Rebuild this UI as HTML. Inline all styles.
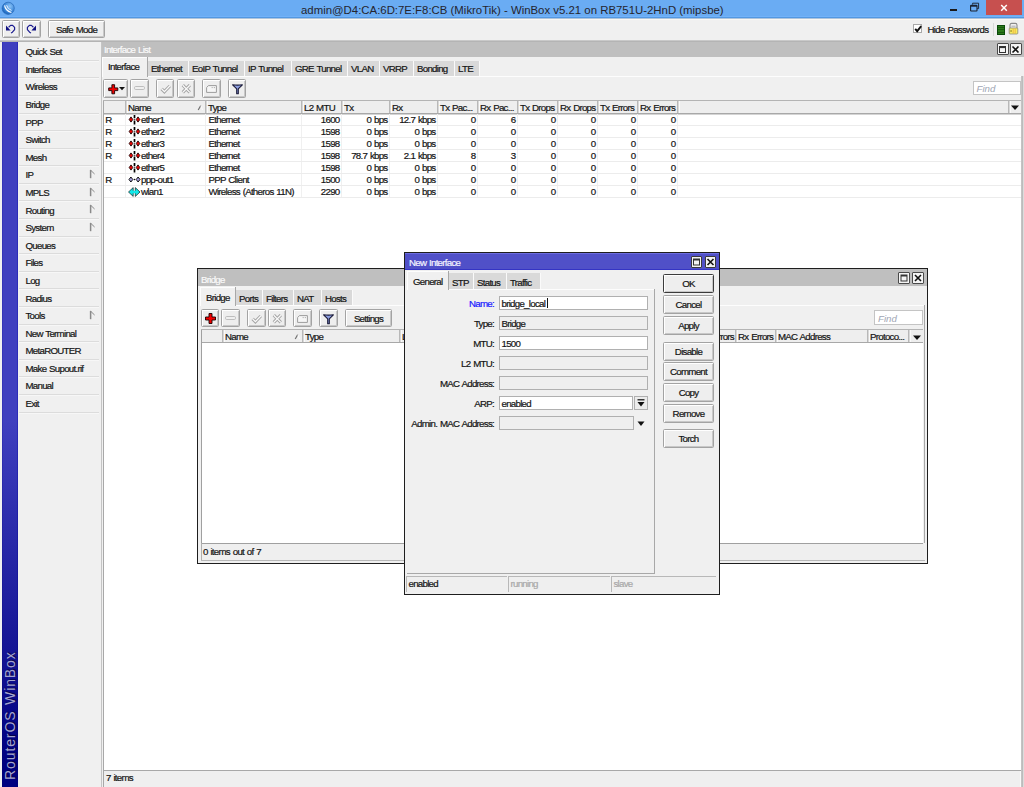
<!DOCTYPE html>
<html><head><meta charset="utf-8"><style>
html,body{margin:0;padding:0}
body{width:1024px;height:787px;overflow:hidden;position:relative;background:#f0f0f0;font-family:"Liberation Sans",sans-serif}
body>div,body>svg{position:absolute}
.t{white-space:nowrap;word-spacing:0.8px;-webkit-text-stroke:0.2px currentColor}
</style></head><body>
<div style="left:0px;top:0px;width:1024px;height:18px;background:#6aacf3"></div>
<div style="left:0px;top:16px;width:1024px;height:1px;background:#72b2f8"></div>
<div style="left:0px;top:17px;width:1024px;height:1px;background:#5298e2"></div>
<div style="left:0px;top:18px;width:1024px;height:1px;background:#aec4dc"></div>
<div style="left:0px;top:19px;width:1024px;height:1px;background:#f9f7f2"></div>
<svg style="position:absolute;left:0px;top:0px" width="17" height="17" viewBox="0 0 17 17"><defs><radialGradient id="ig" cx="0.62" cy="0.35" r="0.75"><stop offset="0" stop-color="#8cc4f8"/><stop offset="0.6" stop-color="#3a86d8"/><stop offset="1" stop-color="#0a56b0"/></radialGradient></defs><circle cx="8.2" cy="8.3" r="6.1" fill="url(#ig)" stroke="#2a6ab8" stroke-width="0.7"/><path d="M4.6 5.4 Q5.2 10.6 11.4 12.6" stroke="#fff" stroke-width="1.1" fill="none"/><path d="M6.6 5.2 Q7.4 9.2 11.6 10.4" stroke="#f0f6ff" stroke-width="0.9" fill="none"/></svg>
<div class="t" style="left:301px;top:4.65px;font-size:11.4px;line-height:11.4px;color:#25252f;letter-spacing:0px;word-spacing:0;-webkit-text-stroke:0">admin@D4:CA:6D:7E:F8:CB (MikroTik) - WinBox v5.21 on RB751U-2HnD (mipsbe)</div>
<div style="left:950px;top:9px;width:7px;height:2px;background:#1a1a1a"></div>
<svg style="position:absolute;left:969px;top:2px" width="11" height="10" viewBox="0 0 11 10"><path d="M3.6 2.6 V1.2 H9.6 V6.6 H8.2" fill="none" stroke="#1f2b3a" stroke-width="1"/><rect x="1.6" y="3.4" width="6.4" height="5.6" rx="0.6" fill="#6aacf3" stroke="#1a2230" stroke-width="1.1"/><rect x="1.6" y="3.4" width="6.4" height="1.3" fill="#1a2230"/></svg>
<div style="left:986px;top:0px;width:36px;height:15px;background:#c7504f"></div>
<svg style="position:absolute;left:1000px;top:4px" width="8" height="8" viewBox="0 0 8 8"><path d="M1.2 0.9 L6.8 6.7 M6.8 0.9 L1.2 6.7" stroke="#fff" stroke-width="1.5"/></svg>
<div style="left:1.5px;top:20px;width:18.5px;height:18px;background:#eeeeee;border:1px solid #a3a3a3;box-sizing:border-box;box-shadow:inset 1px 1px 0 #fff, inset -1px -1px 0 #c8c8c8;border-radius:1.5px"></div>
<div style="left:22px;top:20px;width:18.5px;height:18px;background:#eeeeee;border:1px solid #a3a3a3;box-sizing:border-box;box-shadow:inset 1px 1px 0 #fff, inset -1px -1px 0 #c8c8c8;border-radius:1.5px"></div>
<svg style="position:absolute;left:4px;top:23px" width="13" height="12" viewBox="0 0 13 12"><path d="M4.6 4.2 L6.6 2.4 H8.6 L10.6 4.4 V6.6 L8.4 9.2 L7 10" stroke="#1c1c90" stroke-width="1.2" fill="none" stroke-linejoin="round"/><path d="M2 2.6 V7.6 H6.6 Z" fill="#101080"/></svg>
<svg style="position:absolute;left:25px;top:23px" width="13" height="12" viewBox="0 0 13 12"><path d="M8.4 4.2 L6.4 2.4 H4.4 L2.4 4.4 V6.6 L4.6 9.2 L6 10" stroke="#1c1c90" stroke-width="1.2" fill="none" stroke-linejoin="round"/><path d="M11 2.6 V7.6 H6.4 Z" fill="#101080"/></svg>
<div style="left:48px;top:20px;width:57px;height:18px;background:#eeeeee;border:1px solid #a3a3a3;box-sizing:border-box;box-shadow:inset 1px 1px 0 #fff, inset -1px -1px 0 #c8c8c8;border-radius:1.5px"></div>
<div class="t" style="left:48px;width:57px;top:24.69px;font-size:9.7px;line-height:9.7px;color:#141414;letter-spacing:-0.72px;text-align:center;">Safe Mode</div>
<div style="left:913px;top:24px;width:9px;height:9px;background:#fff;border:1px solid #a8a8a8;box-sizing:border-box"></div>
<svg style="position:absolute;left:914px;top:25px" width="8" height="8" viewBox="0 0 8 8"><path d="M1.2 3.8 L3.2 6.2 L7.2 1.2" stroke="#111" stroke-width="1.9" fill="none"/></svg>
<div class="t" style="left:927.6px;top:24.99px;font-size:9.7px;line-height:9.7px;color:#141414;letter-spacing:-0.72px;">Hide Passwords</div>
<div style="left:993px;top:23px;width:1px;height:13px;background:#d8d8d8"></div>
<div style="left:997px;top:25px;width:8px;height:9.5px;background:repeating-linear-gradient(#2a7a1a 0px,#2a7a1a 1.2px,#1a5a10 1.2px,#1a5a10 2.2px);border:1px solid #0a4a0a;box-sizing:border-box"></div>
<svg style="position:absolute;left:1008px;top:22px" width="11" height="13" viewBox="0 0 11 13"><path d="M2 6.5 V3.2 Q2 1.4 3.6 1.4 H7.4 Q9 1.4 9 3.2 V6.5" stroke="#8a8a8a" stroke-width="1.1" fill="none"/><path d="M3.4 4.2 H7.6" stroke="#9a9a9a" stroke-width="0.8"/><rect x="1.2" y="6" width="8.6" height="6" rx="0.8" fill="#f6ee60" stroke="#8a8a80" stroke-width="0.8"/><path d="M5.2 6.5 V11.6 M7.2 6.5 V11.6" stroke="#f0b040" stroke-width="0.9"/><rect x="2.6" y="8.2" width="0.9" height="1.6" fill="#6a5010"/></svg>
<div style="left:0px;top:40px;width:1024px;height:1px;background:#c9c9c9"></div>
<div style="left:0px;top:41px;width:1024px;height:1px;background:#b4b4b4"></div>
<div style="left:0px;top:42px;width:101px;height:745px;background:#f0f0f0"></div>
<div style="left:2px;top:42px;width:16px;height:745px;background:linear-gradient(#3f3fbf 0%, #3f3fbf 50.7%, #000080 97%, #000080 100%)"></div>
<div style="left:2px;top:42px;width:1px;height:745px;background:linear-gradient(#3434b8 0%, #3434b8 50%, #000078 97%)"></div>
<div style="left:17px;top:42px;width:1px;height:745px;background:linear-gradient(#2c2cb8 0%, #2c2cb8 50%, #000078 97%)"></div>
<div class="t" style="left:4.5px;top:779.5px;font-size:14px;line-height:11px;color:#a4a4d0;-webkit-text-stroke:0;text-shadow:0.8px 0.8px 0.8px rgba(0,0,40,0.7);transform:rotate(-90deg);transform-origin:0 0;letter-spacing:0.9px">RouterOS WinBox</div>
<div style="left:19px;top:60px;width:80px;height:1px;background:#dcdcdc"></div>
<div style="left:19px;top:61px;width:80px;height:1px;background:#f7f7f7"></div>
<div class="t" style="left:25.5px;top:47.29px;font-size:9.7px;line-height:9.7px;color:#141414;letter-spacing:-0.72px;">Quick Set</div>
<div style="left:19px;top:77px;width:80px;height:1px;background:#dcdcdc"></div>
<div style="left:19px;top:78px;width:80px;height:1px;background:#f7f7f7"></div>
<div class="t" style="left:25.5px;top:64.88px;font-size:9.7px;line-height:9.7px;color:#141414;letter-spacing:-0.72px;">Interfaces</div>
<div style="left:19px;top:95px;width:80px;height:1px;background:#dcdcdc"></div>
<div style="left:19px;top:96px;width:80px;height:1px;background:#f7f7f7"></div>
<div class="t" style="left:25.5px;top:82.46px;font-size:9.7px;line-height:9.7px;color:#141414;letter-spacing:-0.72px;">Wireless</div>
<div style="left:19px;top:113px;width:80px;height:1px;background:#dcdcdc"></div>
<div style="left:19px;top:114px;width:80px;height:1px;background:#f7f7f7"></div>
<div class="t" style="left:25.5px;top:100.05px;font-size:9.7px;line-height:9.7px;color:#141414;letter-spacing:-0.72px;">Bridge</div>
<div style="left:19px;top:130px;width:80px;height:1px;background:#dcdcdc"></div>
<div style="left:19px;top:131px;width:80px;height:1px;background:#f7f7f7"></div>
<div class="t" style="left:25.5px;top:117.64px;font-size:9.7px;line-height:9.7px;color:#141414;letter-spacing:-0.72px;">PPP</div>
<div style="left:19px;top:148px;width:80px;height:1px;background:#dcdcdc"></div>
<div style="left:19px;top:149px;width:80px;height:1px;background:#f7f7f7"></div>
<div class="t" style="left:25.5px;top:135.23px;font-size:9.7px;line-height:9.7px;color:#141414;letter-spacing:-0.72px;">Switch</div>
<div style="left:19px;top:165px;width:80px;height:1px;background:#dcdcdc"></div>
<div style="left:19px;top:166px;width:80px;height:1px;background:#f7f7f7"></div>
<div class="t" style="left:25.5px;top:152.82px;font-size:9.7px;line-height:9.7px;color:#141414;letter-spacing:-0.72px;">Mesh</div>
<div style="left:19px;top:183px;width:80px;height:1px;background:#dcdcdc"></div>
<div style="left:19px;top:184px;width:80px;height:1px;background:#f7f7f7"></div>
<div class="t" style="left:25.5px;top:170.40px;font-size:9.7px;line-height:9.7px;color:#141414;letter-spacing:-0.72px;">IP</div>
<svg style="position:absolute;left:88.5px;top:168.9px" width="7" height="10" viewBox="0 0 7 10"><path d="M1.6 1 V9.2" stroke="#8a8a8a" stroke-width="1.5" fill="none"/><path d="M1.6 1.2 L5.6 5" stroke="#8a8a8a" stroke-width="1" fill="none"/></svg>
<div style="left:19px;top:200px;width:80px;height:1px;background:#dcdcdc"></div>
<div style="left:19px;top:201px;width:80px;height:1px;background:#f7f7f7"></div>
<div class="t" style="left:25.5px;top:187.99px;font-size:9.7px;line-height:9.7px;color:#141414;letter-spacing:-0.72px;">MPLS</div>
<svg style="position:absolute;left:88.5px;top:186.5px" width="7" height="10" viewBox="0 0 7 10"><path d="M1.6 1 V9.2" stroke="#8a8a8a" stroke-width="1.5" fill="none"/><path d="M1.6 1.2 L5.6 5" stroke="#8a8a8a" stroke-width="1" fill="none"/></svg>
<div style="left:19px;top:218px;width:80px;height:1px;background:#dcdcdc"></div>
<div style="left:19px;top:219px;width:80px;height:1px;background:#f7f7f7"></div>
<div class="t" style="left:25.5px;top:205.58px;font-size:9.7px;line-height:9.7px;color:#141414;letter-spacing:-0.72px;">Routing</div>
<svg style="position:absolute;left:88.5px;top:204.1px" width="7" height="10" viewBox="0 0 7 10"><path d="M1.6 1 V9.2" stroke="#8a8a8a" stroke-width="1.5" fill="none"/><path d="M1.6 1.2 L5.6 5" stroke="#8a8a8a" stroke-width="1" fill="none"/></svg>
<div style="left:19px;top:236px;width:80px;height:1px;background:#dcdcdc"></div>
<div style="left:19px;top:237px;width:80px;height:1px;background:#f7f7f7"></div>
<div class="t" style="left:25.5px;top:223.17px;font-size:9.7px;line-height:9.7px;color:#141414;letter-spacing:-0.72px;">System</div>
<svg style="position:absolute;left:88.5px;top:221.7px" width="7" height="10" viewBox="0 0 7 10"><path d="M1.6 1 V9.2" stroke="#8a8a8a" stroke-width="1.5" fill="none"/><path d="M1.6 1.2 L5.6 5" stroke="#8a8a8a" stroke-width="1" fill="none"/></svg>
<div style="left:19px;top:253px;width:80px;height:1px;background:#dcdcdc"></div>
<div style="left:19px;top:254px;width:80px;height:1px;background:#f7f7f7"></div>
<div class="t" style="left:25.5px;top:240.76px;font-size:9.7px;line-height:9.7px;color:#141414;letter-spacing:-0.72px;">Queues</div>
<div style="left:19px;top:271px;width:80px;height:1px;background:#dcdcdc"></div>
<div style="left:19px;top:272px;width:80px;height:1px;background:#f7f7f7"></div>
<div class="t" style="left:25.5px;top:258.34px;font-size:9.7px;line-height:9.7px;color:#141414;letter-spacing:-0.72px;">Files</div>
<div style="left:19px;top:288px;width:80px;height:1px;background:#dcdcdc"></div>
<div style="left:19px;top:289px;width:80px;height:1px;background:#f7f7f7"></div>
<div class="t" style="left:25.5px;top:275.93px;font-size:9.7px;line-height:9.7px;color:#141414;letter-spacing:-0.72px;">Log</div>
<div style="left:19px;top:306px;width:80px;height:1px;background:#dcdcdc"></div>
<div style="left:19px;top:307px;width:80px;height:1px;background:#f7f7f7"></div>
<div class="t" style="left:25.5px;top:293.52px;font-size:9.7px;line-height:9.7px;color:#141414;letter-spacing:-0.72px;">Radius</div>
<div style="left:19px;top:324px;width:80px;height:1px;background:#dcdcdc"></div>
<div style="left:19px;top:325px;width:80px;height:1px;background:#f7f7f7"></div>
<div class="t" style="left:25.5px;top:311.11px;font-size:9.7px;line-height:9.7px;color:#141414;letter-spacing:-0.72px;">Tools</div>
<svg style="position:absolute;left:88.5px;top:309.6px" width="7" height="10" viewBox="0 0 7 10"><path d="M1.6 1 V9.2" stroke="#8a8a8a" stroke-width="1.5" fill="none"/><path d="M1.6 1.2 L5.6 5" stroke="#8a8a8a" stroke-width="1" fill="none"/></svg>
<div style="left:19px;top:341px;width:80px;height:1px;background:#dcdcdc"></div>
<div style="left:19px;top:342px;width:80px;height:1px;background:#f7f7f7"></div>
<div class="t" style="left:25.5px;top:328.70px;font-size:9.7px;line-height:9.7px;color:#141414;letter-spacing:-0.72px;">New Terminal</div>
<div style="left:19px;top:359px;width:80px;height:1px;background:#dcdcdc"></div>
<div style="left:19px;top:360px;width:80px;height:1px;background:#f7f7f7"></div>
<div class="t" style="left:25.5px;top:346.28px;font-size:9.7px;line-height:9.7px;color:#141414;letter-spacing:-0.72px;">MetaROUTER</div>
<div style="left:19px;top:376px;width:80px;height:1px;background:#dcdcdc"></div>
<div style="left:19px;top:377px;width:80px;height:1px;background:#f7f7f7"></div>
<div class="t" style="left:25.5px;top:363.87px;font-size:9.7px;line-height:9.7px;color:#141414;letter-spacing:-0.72px;">Make Supout.rif</div>
<div style="left:19px;top:394px;width:80px;height:1px;background:#dcdcdc"></div>
<div style="left:19px;top:395px;width:80px;height:1px;background:#f7f7f7"></div>
<div class="t" style="left:25.5px;top:381.46px;font-size:9.7px;line-height:9.7px;color:#141414;letter-spacing:-0.72px;">Manual</div>
<div style="left:19px;top:412px;width:80px;height:1px;background:#dcdcdc"></div>
<div style="left:19px;top:413px;width:80px;height:1px;background:#f7f7f7"></div>
<div class="t" style="left:25.5px;top:399.05px;font-size:9.7px;line-height:9.7px;color:#141414;letter-spacing:-0.72px;">Exit</div>
<div style="left:101px;top:42px;width:1px;height:745px;background:#c4c4c4"></div>
<div style="left:102px;top:42px;width:922px;height:745px;background:#f0f0f0"></div>
<div style="left:102px;top:42px;width:922px;height:15px;background:#bfbfbf"></div>
<div class="t" style="left:104px;top:45.39px;font-size:9.7px;line-height:9.7px;color:#fafafa;letter-spacing:-0.72px;">Interface List</div>
<div style="left:997px;top:43px;width:11.5px;height:12px;background:#f4f4f4;border:1px solid #4a4a4a;box-sizing:border-box;border-radius:1px"></div>
<svg style="position:absolute;left:997px;top:43.5px" width="11" height="11" viewBox="0 0 11 11"><rect x="2.5" y="2.5" width="6" height="6" fill="none" stroke="#333" stroke-width="1"/><rect x="2.5" y="2.5" width="6" height="1.6" fill="#333"/></svg>
<div style="left:1010px;top:43px;width:11.5px;height:12px;background:#f4f4f4;border:1px solid #4a4a4a;box-sizing:border-box;border-radius:1px"></div>
<svg style="position:absolute;left:1010px;top:43.5px" width="11" height="11" viewBox="0 0 11 11"><path d="M2.5 2.5 L8.5 8.5 M8.5 2.5 L2.5 8.5" stroke="#111" stroke-width="1.6"/></svg>
<div style="left:102px;top:57px;width:46px;height:20px;background:#f0f0f0"></div>
<div style="left:102px;top:57px;width:46px;height:1px;background:#fdfdfd"></div>
<div style="left:102px;top:57px;width:1px;height:20px;background:#fdfdfd"></div>
<div style="left:147px;top:57px;width:1px;height:20px;background:#a8a8a8"></div>
<div class="t" style="left:108px;top:62.49px;font-size:9.7px;line-height:9.7px;color:#141414;letter-spacing:-0.72px;">Interface</div>
<div style="left:148px;top:61px;width:40px;height:15px;background:#d9d9d9"></div>
<div style="left:188px;top:61px;width:1px;height:15px;background:#fafafa"></div>
<div class="t" style="left:151px;top:64.19px;font-size:9.7px;line-height:9.7px;color:#141414;letter-spacing:-0.72px;">Ethernet</div>
<div style="left:189px;top:61px;width:55px;height:15px;background:#d9d9d9"></div>
<div style="left:244px;top:61px;width:1px;height:15px;background:#fafafa"></div>
<div class="t" style="left:192px;top:64.19px;font-size:9.7px;line-height:9.7px;color:#141414;letter-spacing:-0.72px;">EoIP Tunnel</div>
<div style="left:245px;top:61px;width:46px;height:15px;background:#d9d9d9"></div>
<div style="left:291px;top:61px;width:1px;height:15px;background:#fafafa"></div>
<div class="t" style="left:248px;top:64.19px;font-size:9.7px;line-height:9.7px;color:#141414;letter-spacing:-0.72px;">IP Tunnel</div>
<div style="left:292px;top:61px;width:55px;height:15px;background:#d9d9d9"></div>
<div style="left:347px;top:61px;width:1px;height:15px;background:#fafafa"></div>
<div class="t" style="left:295px;top:64.19px;font-size:9.7px;line-height:9.7px;color:#141414;letter-spacing:-0.72px;">GRE Tunnel</div>
<div style="left:348px;top:61px;width:31px;height:15px;background:#d9d9d9"></div>
<div style="left:379px;top:61px;width:1px;height:15px;background:#fafafa"></div>
<div class="t" style="left:351px;top:64.19px;font-size:9.7px;line-height:9.7px;color:#141414;letter-spacing:-0.72px;">VLAN</div>
<div style="left:380px;top:61px;width:33px;height:15px;background:#d9d9d9"></div>
<div style="left:413px;top:61px;width:1px;height:15px;background:#fafafa"></div>
<div class="t" style="left:383px;top:64.19px;font-size:9.7px;line-height:9.7px;color:#141414;letter-spacing:-0.72px;">VRRP</div>
<div style="left:414px;top:61px;width:40px;height:15px;background:#d9d9d9"></div>
<div style="left:454px;top:61px;width:1px;height:15px;background:#fafafa"></div>
<div class="t" style="left:417px;top:64.19px;font-size:9.7px;line-height:9.7px;color:#141414;letter-spacing:-0.72px;">Bonding</div>
<div style="left:455px;top:61px;width:24px;height:15px;background:#d9d9d9"></div>
<div style="left:479px;top:61px;width:1px;height:15px;background:#fafafa"></div>
<div class="t" style="left:458px;top:64.19px;font-size:9.7px;line-height:9.7px;color:#141414;letter-spacing:-0.72px;">LTE</div>
<div style="left:148px;top:76px;width:874px;height:1px;background:#fdfdfd"></div>
<div style="left:103px;top:79px;width:25px;height:19px;background:#eeeeee;border:1px solid #a3a3a3;box-sizing:border-box;box-shadow:inset 1px 1px 0 #fff, inset -1px -1px 0 #c8c8c8;border-radius:1.5px"></div>
<svg style="position:absolute;left:107.5px;top:83.5px" width="11" height="11" viewBox="0 0 11 11"><path d="M3.9 0.7 H6.6 V3.9 H9.8 V6.6 H6.6 V9.8 H3.9 V6.6 H0.7 V3.9 H3.9 Z" fill="#f00000" stroke="#1a0000" stroke-width="0.9" stroke-linejoin="round"/></svg>
<svg style="position:absolute;left:119px;top:86.8px" width="6" height="4" viewBox="0 0 6 4"><path d="M0 0 H6 L3 3.2 Z" fill="#111"/></svg>
<div style="left:130px;top:79px;width:19px;height:19px;background:#eeeeee;border:1px solid #a3a3a3;box-sizing:border-box;box-shadow:inset 1px 1px 0 #fff, inset -1px -1px 0 #c8c8c8;border-radius:1.5px"></div>
<svg style="position:absolute;left:134px;top:86px" width="11" height="4" viewBox="0 0 11 4"><rect x="0.6" y="0.6" width="9.8" height="2.8" rx="0.8" fill="#f6f6f6" stroke="#b8b8b8" stroke-width="1"/></svg>
<div style="left:156px;top:79px;width:18px;height:19px;background:#eeeeee;border:1px solid #a3a3a3;box-sizing:border-box;box-shadow:inset 1px 1px 0 #fff, inset -1px -1px 0 #c8c8c8;border-radius:1.5px"></div>
<svg style="position:absolute;left:160px;top:84px" width="12" height="10" viewBox="0 0 12 10"><path d="M1.6 4.8 L4.4 7.6 L9.8 2" stroke="#a4a4a4" stroke-width="3.2" fill="none"/><path d="M1.6 4.8 L4.4 7.6 L9.8 2" stroke="#fafafa" stroke-width="1.3" fill="none"/></svg>
<div style="left:177px;top:79px;width:18px;height:19px;background:#eeeeee;border:1px solid #a3a3a3;box-sizing:border-box;box-shadow:inset 1px 1px 0 #fff, inset -1px -1px 0 #c8c8c8;border-radius:1.5px"></div>
<svg style="position:absolute;left:181px;top:84px" width="11" height="10" viewBox="0 0 11 10"><path d="M1.8 1.2 L8.8 8.4 M8.8 1.2 L1.8 8.4" stroke="#a4a4a4" stroke-width="3.2" fill="none"/><path d="M1.8 1.2 L8.8 8.4 M8.8 1.2 L1.8 8.4" stroke="#fafafa" stroke-width="1.3" fill="none"/></svg>
<div style="left:202px;top:79px;width:19px;height:19px;background:#eeeeee;border:1px solid #a3a3a3;box-sizing:border-box;box-shadow:inset 1px 1px 0 #fff, inset -1px -1px 0 #c8c8c8;border-radius:1.5px"></div>
<svg style="position:absolute;left:206px;top:84px" width="11" height="9" viewBox="0 0 11 9"><path d="M0.6 3.6 L2.4 1.6 H10.4 V8.4 H0.6 Z" fill="#f6f6f6" stroke="#9c9c9c" stroke-width="1"/><path d="M5.6 3.6 h1.2 M7.8 3.6 h1.2" stroke="#a8a8a8" stroke-width="0.9"/></svg>
<div style="left:228px;top:79px;width:18px;height:19px;background:#eeeeee;border:1px solid #a3a3a3;box-sizing:border-box;box-shadow:inset 1px 1px 0 #fff, inset -1px -1px 0 #c8c8c8;border-radius:1.5px"></div>
<svg style="position:absolute;left:232px;top:83.8px" width="11" height="11" viewBox="0 0 11 11"><path d="M0.6 0.8 Q5.5 1.4 10.4 0.8 L6.3 4.8 V9.8 H4.7 V4.8 Z" fill="#8c9ee0" stroke="#1a1a38" stroke-width="1.1" stroke-linejoin="round"/></svg>
<div style="left:973px;top:81px;width:48px;height:14px;background:#fff;border:1px solid #c4c4c4;box-sizing:border-box"></div>
<div class="t" style="left:976.5px;top:84.39px;font-size:9.7px;line-height:9.7px;color:#a0a6b4;letter-spacing:0px;font-style:italic;-webkit-text-stroke:0">Find</div>
<div style="left:1021px;top:76px;width:1px;height:711px;background:#c4c4c4"></div>
<div style="left:1022px;top:76px;width:1px;height:711px;background:#bcbcbc"></div>
<div style="left:1023px;top:76px;width:1px;height:711px;background:#dcdcdc"></div>
<div style="left:103px;top:100px;width:918px;height:671px;background:#fff"></div>
<div style="left:103px;top:100px;width:1px;height:687px;background:#a8a8a8"></div>
<div style="left:103px;top:100px;width:918px;height:1px;background:#b4b4b4"></div>
<div style="left:104px;top:101px;width:917px;height:13px;background:#eeeeee"></div>
<div style="left:104px;top:113px;width:917px;height:1px;background:#a8a8a8"></div>
<div style="left:104px;top:114px;width:917px;height:1px;background:#d4d4d4"></div>
<div style="left:125px;top:101px;width:1px;height:12px;background:#b8b8b8"></div>
<div style="left:126px;top:101px;width:1px;height:12px;background:#d8d8d8"></div>
<div style="left:127px;top:101px;width:1px;height:12px;background:#fafafa"></div>
<div class="t" style="left:128px;top:103.49px;font-size:9.7px;line-height:9.7px;color:#141414;letter-spacing:-0.72px;">Name</div>
<div style="left:205px;top:101px;width:1px;height:12px;background:#b8b8b8"></div>
<div style="left:206px;top:101px;width:1px;height:12px;background:#d8d8d8"></div>
<div style="left:207px;top:101px;width:1px;height:12px;background:#fafafa"></div>
<div class="t" style="left:208px;top:103.49px;font-size:9.7px;line-height:9.7px;color:#141414;letter-spacing:-0.72px;">Type</div>
<div style="left:301px;top:101px;width:1px;height:12px;background:#b8b8b8"></div>
<div style="left:302px;top:101px;width:1px;height:12px;background:#d8d8d8"></div>
<div style="left:303px;top:101px;width:1px;height:12px;background:#fafafa"></div>
<div class="t" style="left:304px;top:103.49px;font-size:9.7px;line-height:9.7px;color:#141414;letter-spacing:-0.72px;">L2 MTU</div>
<div style="left:341px;top:101px;width:1px;height:12px;background:#b8b8b8"></div>
<div style="left:342px;top:101px;width:1px;height:12px;background:#d8d8d8"></div>
<div style="left:343px;top:101px;width:1px;height:12px;background:#fafafa"></div>
<div class="t" style="left:344px;top:103.49px;font-size:9.7px;line-height:9.7px;color:#141414;letter-spacing:-0.72px;">Tx</div>
<div style="left:389px;top:101px;width:1px;height:12px;background:#b8b8b8"></div>
<div style="left:390px;top:101px;width:1px;height:12px;background:#d8d8d8"></div>
<div style="left:391px;top:101px;width:1px;height:12px;background:#fafafa"></div>
<div class="t" style="left:392px;top:103.49px;font-size:9.7px;line-height:9.7px;color:#141414;letter-spacing:-0.72px;">Rx</div>
<div style="left:437px;top:101px;width:1px;height:12px;background:#b8b8b8"></div>
<div style="left:438px;top:101px;width:1px;height:12px;background:#d8d8d8"></div>
<div style="left:439px;top:101px;width:1px;height:12px;background:#fafafa"></div>
<div class="t" style="left:440px;top:103.49px;font-size:9.7px;line-height:9.7px;color:#141414;letter-spacing:-0.72px;">Tx Pac...</div>
<div style="left:477px;top:101px;width:1px;height:12px;background:#b8b8b8"></div>
<div style="left:478px;top:101px;width:1px;height:12px;background:#d8d8d8"></div>
<div style="left:479px;top:101px;width:1px;height:12px;background:#fafafa"></div>
<div class="t" style="left:480px;top:103.49px;font-size:9.7px;line-height:9.7px;color:#141414;letter-spacing:-0.72px;">Rx Pac...</div>
<div style="left:517px;top:101px;width:1px;height:12px;background:#b8b8b8"></div>
<div style="left:518px;top:101px;width:1px;height:12px;background:#d8d8d8"></div>
<div style="left:519px;top:101px;width:1px;height:12px;background:#fafafa"></div>
<div class="t" style="left:520px;top:103.49px;font-size:9.7px;line-height:9.7px;color:#141414;letter-spacing:-0.72px;">Tx Drops</div>
<div style="left:557px;top:101px;width:1px;height:12px;background:#b8b8b8"></div>
<div style="left:558px;top:101px;width:1px;height:12px;background:#d8d8d8"></div>
<div style="left:559px;top:101px;width:1px;height:12px;background:#fafafa"></div>
<div class="t" style="left:560px;top:103.49px;font-size:9.7px;line-height:9.7px;color:#141414;letter-spacing:-0.72px;">Rx Drops</div>
<div style="left:597px;top:101px;width:1px;height:12px;background:#b8b8b8"></div>
<div style="left:598px;top:101px;width:1px;height:12px;background:#d8d8d8"></div>
<div style="left:599px;top:101px;width:1px;height:12px;background:#fafafa"></div>
<div class="t" style="left:600px;top:103.49px;font-size:9.7px;line-height:9.7px;color:#141414;letter-spacing:-0.72px;">Tx Errors</div>
<div style="left:637px;top:101px;width:1px;height:12px;background:#b8b8b8"></div>
<div style="left:638px;top:101px;width:1px;height:12px;background:#d8d8d8"></div>
<div style="left:639px;top:101px;width:1px;height:12px;background:#fafafa"></div>
<div class="t" style="left:640px;top:103.49px;font-size:9.7px;line-height:9.7px;color:#141414;letter-spacing:-0.72px;">Rx Errors</div>
<div style="left:677px;top:101px;width:1px;height:12px;background:#b8b8b8"></div>
<div style="left:678px;top:101px;width:1px;height:12px;background:#d8d8d8"></div>
<div style="left:679px;top:101px;width:1px;height:12px;background:#fafafa"></div>
<div style="left:1008px;top:101px;width:1px;height:12px;background:#b8b8b8"></div>
<div style="left:1009px;top:101px;width:1px;height:12px;background:#d8d8d8"></div>
<div style="left:1010px;top:101px;width:1px;height:12px;background:#fafafa"></div>
<svg style="position:absolute;left:197px;top:104px" width="7" height="7" viewBox="0 0 7 7"><path d="M1.2 6 L3.8 1.5" stroke="#707070" stroke-width="1.2" fill="none"/><path d="M3.8 1.5 L5.5 6" stroke="#fdfdfd" stroke-width="0.9" fill="none"/></svg>
<svg style="position:absolute;left:1011px;top:104.8px" width="8" height="6" viewBox="0 0 8 6"><path d="M0 0.5 H8 L4 5 Z" fill="#111"/></svg>
<div style="left:104px;top:125px;width:917px;height:1px;background:#ececec"></div>
<div style="left:125px;top:114px;width:1px;height:11px;background:#f0f0f0"></div>
<div style="left:205px;top:114px;width:1px;height:11px;background:#f0f0f0"></div>
<div style="left:301px;top:114px;width:1px;height:11px;background:#f0f0f0"></div>
<div style="left:341px;top:114px;width:1px;height:11px;background:#f0f0f0"></div>
<div style="left:389px;top:114px;width:1px;height:11px;background:#f0f0f0"></div>
<div style="left:437px;top:114px;width:1px;height:11px;background:#f0f0f0"></div>
<div style="left:477px;top:114px;width:1px;height:11px;background:#f0f0f0"></div>
<div style="left:517px;top:114px;width:1px;height:11px;background:#f0f0f0"></div>
<div style="left:557px;top:114px;width:1px;height:11px;background:#f0f0f0"></div>
<div style="left:597px;top:114px;width:1px;height:11px;background:#f0f0f0"></div>
<div style="left:637px;top:114px;width:1px;height:11px;background:#f0f0f0"></div>
<div style="left:677px;top:114px;width:1px;height:11px;background:#f0f0f0"></div>
<div class="t" style="left:105.3px;top:115.39px;font-size:9.7px;line-height:9.7px;color:#141414;letter-spacing:-0.72px;">R</div>
<svg style="position:absolute;left:128px;top:114.5px" width="13" height="10" viewBox="0 0 13 10"><path d="M1.2 4.5 L3 1.9 L4.8 4.5 L3 7.1 Z" fill="#ee0000" stroke="#1a0000" stroke-width="0.9"/><path d="M8.2 4.5 L10 1.9 L11.8 4.5 L10 7.1 Z" fill="#ee0000" stroke="#1a0000" stroke-width="0.9"/><path d="M6.5 0 V3.2 M6.5 5.6 V9.5" stroke="#000" stroke-width="1.7"/><circle cx="6.5" cy="4.4" r="0.6" fill="#555"/></svg>
<div class="t" style="left:141px;top:115.39px;font-size:9.7px;line-height:9.7px;color:#141414;letter-spacing:-0.72px;">ether1</div>
<div class="t" style="left:208.5px;top:115.39px;font-size:9.7px;line-height:9.7px;color:#141414;letter-spacing:-0.72px;">Ethernet</div>
<div class="t" style="right:684.5px;top:115.39px;font-size:9.7px;line-height:9.7px;color:#141414;letter-spacing:-0.72px;text-align:right;">1600</div>
<div class="t" style="right:636.5px;top:115.39px;font-size:9.7px;line-height:9.7px;color:#141414;letter-spacing:-0.72px;text-align:right;">0 bps</div>
<div class="t" style="right:588.5px;top:115.39px;font-size:9.7px;line-height:9.7px;color:#141414;letter-spacing:-0.72px;text-align:right;">12.7 kbps</div>
<div class="t" style="right:548.5px;top:115.39px;font-size:9.7px;line-height:9.7px;color:#141414;letter-spacing:-0.72px;text-align:right;">0</div>
<div class="t" style="right:508.5px;top:115.39px;font-size:9.7px;line-height:9.7px;color:#141414;letter-spacing:-0.72px;text-align:right;">6</div>
<div class="t" style="right:468.5px;top:115.39px;font-size:9.7px;line-height:9.7px;color:#141414;letter-spacing:-0.72px;text-align:right;">0</div>
<div class="t" style="right:428.5px;top:115.39px;font-size:9.7px;line-height:9.7px;color:#141414;letter-spacing:-0.72px;text-align:right;">0</div>
<div class="t" style="right:388.5px;top:115.39px;font-size:9.7px;line-height:9.7px;color:#141414;letter-spacing:-0.72px;text-align:right;">0</div>
<div class="t" style="right:348.5px;top:115.39px;font-size:9.7px;line-height:9.7px;color:#141414;letter-spacing:-0.72px;text-align:right;">0</div>
<div style="left:104px;top:137px;width:917px;height:1px;background:#ececec"></div>
<div style="left:125px;top:126px;width:1px;height:11px;background:#f0f0f0"></div>
<div style="left:205px;top:126px;width:1px;height:11px;background:#f0f0f0"></div>
<div style="left:301px;top:126px;width:1px;height:11px;background:#f0f0f0"></div>
<div style="left:341px;top:126px;width:1px;height:11px;background:#f0f0f0"></div>
<div style="left:389px;top:126px;width:1px;height:11px;background:#f0f0f0"></div>
<div style="left:437px;top:126px;width:1px;height:11px;background:#f0f0f0"></div>
<div style="left:477px;top:126px;width:1px;height:11px;background:#f0f0f0"></div>
<div style="left:517px;top:126px;width:1px;height:11px;background:#f0f0f0"></div>
<div style="left:557px;top:126px;width:1px;height:11px;background:#f0f0f0"></div>
<div style="left:597px;top:126px;width:1px;height:11px;background:#f0f0f0"></div>
<div style="left:637px;top:126px;width:1px;height:11px;background:#f0f0f0"></div>
<div style="left:677px;top:126px;width:1px;height:11px;background:#f0f0f0"></div>
<div class="t" style="left:105.3px;top:127.39px;font-size:9.7px;line-height:9.7px;color:#141414;letter-spacing:-0.72px;">R</div>
<svg style="position:absolute;left:128px;top:126.5px" width="13" height="10" viewBox="0 0 13 10"><path d="M1.2 4.5 L3 1.9 L4.8 4.5 L3 7.1 Z" fill="#ee0000" stroke="#1a0000" stroke-width="0.9"/><path d="M8.2 4.5 L10 1.9 L11.8 4.5 L10 7.1 Z" fill="#ee0000" stroke="#1a0000" stroke-width="0.9"/><path d="M6.5 0 V3.2 M6.5 5.6 V9.5" stroke="#000" stroke-width="1.7"/><circle cx="6.5" cy="4.4" r="0.6" fill="#555"/></svg>
<div class="t" style="left:141px;top:127.39px;font-size:9.7px;line-height:9.7px;color:#141414;letter-spacing:-0.72px;">ether2</div>
<div class="t" style="left:208.5px;top:127.39px;font-size:9.7px;line-height:9.7px;color:#141414;letter-spacing:-0.72px;">Ethernet</div>
<div class="t" style="right:684.5px;top:127.39px;font-size:9.7px;line-height:9.7px;color:#141414;letter-spacing:-0.72px;text-align:right;">1598</div>
<div class="t" style="right:636.5px;top:127.39px;font-size:9.7px;line-height:9.7px;color:#141414;letter-spacing:-0.72px;text-align:right;">0 bps</div>
<div class="t" style="right:588.5px;top:127.39px;font-size:9.7px;line-height:9.7px;color:#141414;letter-spacing:-0.72px;text-align:right;">0 bps</div>
<div class="t" style="right:548.5px;top:127.39px;font-size:9.7px;line-height:9.7px;color:#141414;letter-spacing:-0.72px;text-align:right;">0</div>
<div class="t" style="right:508.5px;top:127.39px;font-size:9.7px;line-height:9.7px;color:#141414;letter-spacing:-0.72px;text-align:right;">0</div>
<div class="t" style="right:468.5px;top:127.39px;font-size:9.7px;line-height:9.7px;color:#141414;letter-spacing:-0.72px;text-align:right;">0</div>
<div class="t" style="right:428.5px;top:127.39px;font-size:9.7px;line-height:9.7px;color:#141414;letter-spacing:-0.72px;text-align:right;">0</div>
<div class="t" style="right:388.5px;top:127.39px;font-size:9.7px;line-height:9.7px;color:#141414;letter-spacing:-0.72px;text-align:right;">0</div>
<div class="t" style="right:348.5px;top:127.39px;font-size:9.7px;line-height:9.7px;color:#141414;letter-spacing:-0.72px;text-align:right;">0</div>
<div style="left:104px;top:149px;width:917px;height:1px;background:#ececec"></div>
<div style="left:125px;top:138px;width:1px;height:11px;background:#f0f0f0"></div>
<div style="left:205px;top:138px;width:1px;height:11px;background:#f0f0f0"></div>
<div style="left:301px;top:138px;width:1px;height:11px;background:#f0f0f0"></div>
<div style="left:341px;top:138px;width:1px;height:11px;background:#f0f0f0"></div>
<div style="left:389px;top:138px;width:1px;height:11px;background:#f0f0f0"></div>
<div style="left:437px;top:138px;width:1px;height:11px;background:#f0f0f0"></div>
<div style="left:477px;top:138px;width:1px;height:11px;background:#f0f0f0"></div>
<div style="left:517px;top:138px;width:1px;height:11px;background:#f0f0f0"></div>
<div style="left:557px;top:138px;width:1px;height:11px;background:#f0f0f0"></div>
<div style="left:597px;top:138px;width:1px;height:11px;background:#f0f0f0"></div>
<div style="left:637px;top:138px;width:1px;height:11px;background:#f0f0f0"></div>
<div style="left:677px;top:138px;width:1px;height:11px;background:#f0f0f0"></div>
<div class="t" style="left:105.3px;top:139.39px;font-size:9.7px;line-height:9.7px;color:#141414;letter-spacing:-0.72px;">R</div>
<svg style="position:absolute;left:128px;top:138.5px" width="13" height="10" viewBox="0 0 13 10"><path d="M1.2 4.5 L3 1.9 L4.8 4.5 L3 7.1 Z" fill="#ee0000" stroke="#1a0000" stroke-width="0.9"/><path d="M8.2 4.5 L10 1.9 L11.8 4.5 L10 7.1 Z" fill="#ee0000" stroke="#1a0000" stroke-width="0.9"/><path d="M6.5 0 V3.2 M6.5 5.6 V9.5" stroke="#000" stroke-width="1.7"/><circle cx="6.5" cy="4.4" r="0.6" fill="#555"/></svg>
<div class="t" style="left:141px;top:139.39px;font-size:9.7px;line-height:9.7px;color:#141414;letter-spacing:-0.72px;">ether3</div>
<div class="t" style="left:208.5px;top:139.39px;font-size:9.7px;line-height:9.7px;color:#141414;letter-spacing:-0.72px;">Ethernet</div>
<div class="t" style="right:684.5px;top:139.39px;font-size:9.7px;line-height:9.7px;color:#141414;letter-spacing:-0.72px;text-align:right;">1598</div>
<div class="t" style="right:636.5px;top:139.39px;font-size:9.7px;line-height:9.7px;color:#141414;letter-spacing:-0.72px;text-align:right;">0 bps</div>
<div class="t" style="right:588.5px;top:139.39px;font-size:9.7px;line-height:9.7px;color:#141414;letter-spacing:-0.72px;text-align:right;">0 bps</div>
<div class="t" style="right:548.5px;top:139.39px;font-size:9.7px;line-height:9.7px;color:#141414;letter-spacing:-0.72px;text-align:right;">0</div>
<div class="t" style="right:508.5px;top:139.39px;font-size:9.7px;line-height:9.7px;color:#141414;letter-spacing:-0.72px;text-align:right;">0</div>
<div class="t" style="right:468.5px;top:139.39px;font-size:9.7px;line-height:9.7px;color:#141414;letter-spacing:-0.72px;text-align:right;">0</div>
<div class="t" style="right:428.5px;top:139.39px;font-size:9.7px;line-height:9.7px;color:#141414;letter-spacing:-0.72px;text-align:right;">0</div>
<div class="t" style="right:388.5px;top:139.39px;font-size:9.7px;line-height:9.7px;color:#141414;letter-spacing:-0.72px;text-align:right;">0</div>
<div class="t" style="right:348.5px;top:139.39px;font-size:9.7px;line-height:9.7px;color:#141414;letter-spacing:-0.72px;text-align:right;">0</div>
<div style="left:104px;top:161px;width:917px;height:1px;background:#ececec"></div>
<div style="left:125px;top:150px;width:1px;height:11px;background:#f0f0f0"></div>
<div style="left:205px;top:150px;width:1px;height:11px;background:#f0f0f0"></div>
<div style="left:301px;top:150px;width:1px;height:11px;background:#f0f0f0"></div>
<div style="left:341px;top:150px;width:1px;height:11px;background:#f0f0f0"></div>
<div style="left:389px;top:150px;width:1px;height:11px;background:#f0f0f0"></div>
<div style="left:437px;top:150px;width:1px;height:11px;background:#f0f0f0"></div>
<div style="left:477px;top:150px;width:1px;height:11px;background:#f0f0f0"></div>
<div style="left:517px;top:150px;width:1px;height:11px;background:#f0f0f0"></div>
<div style="left:557px;top:150px;width:1px;height:11px;background:#f0f0f0"></div>
<div style="left:597px;top:150px;width:1px;height:11px;background:#f0f0f0"></div>
<div style="left:637px;top:150px;width:1px;height:11px;background:#f0f0f0"></div>
<div style="left:677px;top:150px;width:1px;height:11px;background:#f0f0f0"></div>
<div class="t" style="left:105.3px;top:151.39px;font-size:9.7px;line-height:9.7px;color:#141414;letter-spacing:-0.72px;">R</div>
<svg style="position:absolute;left:128px;top:150.5px" width="13" height="10" viewBox="0 0 13 10"><path d="M1.2 4.5 L3 1.9 L4.8 4.5 L3 7.1 Z" fill="#ee0000" stroke="#1a0000" stroke-width="0.9"/><path d="M8.2 4.5 L10 1.9 L11.8 4.5 L10 7.1 Z" fill="#ee0000" stroke="#1a0000" stroke-width="0.9"/><path d="M6.5 0 V3.2 M6.5 5.6 V9.5" stroke="#000" stroke-width="1.7"/><circle cx="6.5" cy="4.4" r="0.6" fill="#555"/></svg>
<div class="t" style="left:141px;top:151.39px;font-size:9.7px;line-height:9.7px;color:#141414;letter-spacing:-0.72px;">ether4</div>
<div class="t" style="left:208.5px;top:151.39px;font-size:9.7px;line-height:9.7px;color:#141414;letter-spacing:-0.72px;">Ethernet</div>
<div class="t" style="right:684.5px;top:151.39px;font-size:9.7px;line-height:9.7px;color:#141414;letter-spacing:-0.72px;text-align:right;">1598</div>
<div class="t" style="right:636.5px;top:151.39px;font-size:9.7px;line-height:9.7px;color:#141414;letter-spacing:-0.72px;text-align:right;">78.7 kbps</div>
<div class="t" style="right:588.5px;top:151.39px;font-size:9.7px;line-height:9.7px;color:#141414;letter-spacing:-0.72px;text-align:right;">2.1 kbps</div>
<div class="t" style="right:548.5px;top:151.39px;font-size:9.7px;line-height:9.7px;color:#141414;letter-spacing:-0.72px;text-align:right;">8</div>
<div class="t" style="right:508.5px;top:151.39px;font-size:9.7px;line-height:9.7px;color:#141414;letter-spacing:-0.72px;text-align:right;">3</div>
<div class="t" style="right:468.5px;top:151.39px;font-size:9.7px;line-height:9.7px;color:#141414;letter-spacing:-0.72px;text-align:right;">0</div>
<div class="t" style="right:428.5px;top:151.39px;font-size:9.7px;line-height:9.7px;color:#141414;letter-spacing:-0.72px;text-align:right;">0</div>
<div class="t" style="right:388.5px;top:151.39px;font-size:9.7px;line-height:9.7px;color:#141414;letter-spacing:-0.72px;text-align:right;">0</div>
<div class="t" style="right:348.5px;top:151.39px;font-size:9.7px;line-height:9.7px;color:#141414;letter-spacing:-0.72px;text-align:right;">0</div>
<div style="left:104px;top:173px;width:917px;height:1px;background:#ececec"></div>
<div style="left:125px;top:162px;width:1px;height:11px;background:#f0f0f0"></div>
<div style="left:205px;top:162px;width:1px;height:11px;background:#f0f0f0"></div>
<div style="left:301px;top:162px;width:1px;height:11px;background:#f0f0f0"></div>
<div style="left:341px;top:162px;width:1px;height:11px;background:#f0f0f0"></div>
<div style="left:389px;top:162px;width:1px;height:11px;background:#f0f0f0"></div>
<div style="left:437px;top:162px;width:1px;height:11px;background:#f0f0f0"></div>
<div style="left:477px;top:162px;width:1px;height:11px;background:#f0f0f0"></div>
<div style="left:517px;top:162px;width:1px;height:11px;background:#f0f0f0"></div>
<div style="left:557px;top:162px;width:1px;height:11px;background:#f0f0f0"></div>
<div style="left:597px;top:162px;width:1px;height:11px;background:#f0f0f0"></div>
<div style="left:637px;top:162px;width:1px;height:11px;background:#f0f0f0"></div>
<div style="left:677px;top:162px;width:1px;height:11px;background:#f0f0f0"></div>
<svg style="position:absolute;left:128px;top:162.5px" width="13" height="10" viewBox="0 0 13 10"><path d="M1.2 4.5 L3 1.9 L4.8 4.5 L3 7.1 Z" fill="#ee0000" stroke="#1a0000" stroke-width="0.9"/><path d="M8.2 4.5 L10 1.9 L11.8 4.5 L10 7.1 Z" fill="#ee0000" stroke="#1a0000" stroke-width="0.9"/><path d="M6.5 0 V3.2 M6.5 5.6 V9.5" stroke="#000" stroke-width="1.7"/><circle cx="6.5" cy="4.4" r="0.6" fill="#555"/></svg>
<div class="t" style="left:141px;top:163.39px;font-size:9.7px;line-height:9.7px;color:#141414;letter-spacing:-0.72px;">ether5</div>
<div class="t" style="left:208.5px;top:163.39px;font-size:9.7px;line-height:9.7px;color:#141414;letter-spacing:-0.72px;">Ethernet</div>
<div class="t" style="right:684.5px;top:163.39px;font-size:9.7px;line-height:9.7px;color:#141414;letter-spacing:-0.72px;text-align:right;">1598</div>
<div class="t" style="right:636.5px;top:163.39px;font-size:9.7px;line-height:9.7px;color:#141414;letter-spacing:-0.72px;text-align:right;">0 bps</div>
<div class="t" style="right:588.5px;top:163.39px;font-size:9.7px;line-height:9.7px;color:#141414;letter-spacing:-0.72px;text-align:right;">0 bps</div>
<div class="t" style="right:548.5px;top:163.39px;font-size:9.7px;line-height:9.7px;color:#141414;letter-spacing:-0.72px;text-align:right;">0</div>
<div class="t" style="right:508.5px;top:163.39px;font-size:9.7px;line-height:9.7px;color:#141414;letter-spacing:-0.72px;text-align:right;">0</div>
<div class="t" style="right:468.5px;top:163.39px;font-size:9.7px;line-height:9.7px;color:#141414;letter-spacing:-0.72px;text-align:right;">0</div>
<div class="t" style="right:428.5px;top:163.39px;font-size:9.7px;line-height:9.7px;color:#141414;letter-spacing:-0.72px;text-align:right;">0</div>
<div class="t" style="right:388.5px;top:163.39px;font-size:9.7px;line-height:9.7px;color:#141414;letter-spacing:-0.72px;text-align:right;">0</div>
<div class="t" style="right:348.5px;top:163.39px;font-size:9.7px;line-height:9.7px;color:#141414;letter-spacing:-0.72px;text-align:right;">0</div>
<div style="left:104px;top:185px;width:917px;height:1px;background:#ececec"></div>
<div style="left:125px;top:174px;width:1px;height:11px;background:#f0f0f0"></div>
<div style="left:205px;top:174px;width:1px;height:11px;background:#f0f0f0"></div>
<div style="left:301px;top:174px;width:1px;height:11px;background:#f0f0f0"></div>
<div style="left:341px;top:174px;width:1px;height:11px;background:#f0f0f0"></div>
<div style="left:389px;top:174px;width:1px;height:11px;background:#f0f0f0"></div>
<div style="left:437px;top:174px;width:1px;height:11px;background:#f0f0f0"></div>
<div style="left:477px;top:174px;width:1px;height:11px;background:#f0f0f0"></div>
<div style="left:517px;top:174px;width:1px;height:11px;background:#f0f0f0"></div>
<div style="left:557px;top:174px;width:1px;height:11px;background:#f0f0f0"></div>
<div style="left:597px;top:174px;width:1px;height:11px;background:#f0f0f0"></div>
<div style="left:637px;top:174px;width:1px;height:11px;background:#f0f0f0"></div>
<div style="left:677px;top:174px;width:1px;height:11px;background:#f0f0f0"></div>
<div class="t" style="left:105.3px;top:175.39px;font-size:9.7px;line-height:9.7px;color:#141414;letter-spacing:-0.72px;">R</div>
<svg style="position:absolute;left:128px;top:174.5px" width="13" height="10" viewBox="0 0 13 10"><path d="M1 4.5 L2.9 2 L4.8 4.5 L2.9 7 Z" fill="#a8a0e0" stroke="#111" stroke-width="1"/><path d="M8.2 4.5 L10.1 2 L12 4.5 L10.1 7 Z" fill="#a8a0e0" stroke="#111" stroke-width="1"/><circle cx="6.5" cy="4.5" r="0.8" fill="#111"/></svg>
<div class="t" style="left:141px;top:175.39px;font-size:9.7px;line-height:9.7px;color:#141414;letter-spacing:-0.72px;">ppp-out1</div>
<div class="t" style="left:208.5px;top:175.39px;font-size:9.7px;line-height:9.7px;color:#141414;letter-spacing:-0.72px;">PPP Client</div>
<div class="t" style="right:684.5px;top:175.39px;font-size:9.7px;line-height:9.7px;color:#141414;letter-spacing:-0.72px;text-align:right;">1500</div>
<div class="t" style="right:636.5px;top:175.39px;font-size:9.7px;line-height:9.7px;color:#141414;letter-spacing:-0.72px;text-align:right;">0 bps</div>
<div class="t" style="right:588.5px;top:175.39px;font-size:9.7px;line-height:9.7px;color:#141414;letter-spacing:-0.72px;text-align:right;">0 bps</div>
<div class="t" style="right:548.5px;top:175.39px;font-size:9.7px;line-height:9.7px;color:#141414;letter-spacing:-0.72px;text-align:right;">0</div>
<div class="t" style="right:508.5px;top:175.39px;font-size:9.7px;line-height:9.7px;color:#141414;letter-spacing:-0.72px;text-align:right;">0</div>
<div class="t" style="right:468.5px;top:175.39px;font-size:9.7px;line-height:9.7px;color:#141414;letter-spacing:-0.72px;text-align:right;">0</div>
<div class="t" style="right:428.5px;top:175.39px;font-size:9.7px;line-height:9.7px;color:#141414;letter-spacing:-0.72px;text-align:right;">0</div>
<div class="t" style="right:388.5px;top:175.39px;font-size:9.7px;line-height:9.7px;color:#141414;letter-spacing:-0.72px;text-align:right;">0</div>
<div class="t" style="right:348.5px;top:175.39px;font-size:9.7px;line-height:9.7px;color:#141414;letter-spacing:-0.72px;text-align:right;">0</div>
<div style="left:104px;top:197px;width:917px;height:1px;background:#ececec"></div>
<div style="left:125px;top:186px;width:1px;height:11px;background:#f0f0f0"></div>
<div style="left:205px;top:186px;width:1px;height:11px;background:#f0f0f0"></div>
<div style="left:301px;top:186px;width:1px;height:11px;background:#f0f0f0"></div>
<div style="left:341px;top:186px;width:1px;height:11px;background:#f0f0f0"></div>
<div style="left:389px;top:186px;width:1px;height:11px;background:#f0f0f0"></div>
<div style="left:437px;top:186px;width:1px;height:11px;background:#f0f0f0"></div>
<div style="left:477px;top:186px;width:1px;height:11px;background:#f0f0f0"></div>
<div style="left:517px;top:186px;width:1px;height:11px;background:#f0f0f0"></div>
<div style="left:557px;top:186px;width:1px;height:11px;background:#f0f0f0"></div>
<div style="left:597px;top:186px;width:1px;height:11px;background:#f0f0f0"></div>
<div style="left:637px;top:186px;width:1px;height:11px;background:#f0f0f0"></div>
<div style="left:677px;top:186px;width:1px;height:11px;background:#f0f0f0"></div>
<svg style="position:absolute;left:128px;top:186.5px" width="13" height="11" viewBox="0 0 13 11"><path d="M0.5 5 L5.2 0.6 V9.4 Z" fill="#10e8e8" stroke="#181818" stroke-width="0.7" stroke-linejoin="round"/><path d="M12 5 L7.3 0.6 V9.4 Z" fill="#10e8e8" stroke="#181818" stroke-width="0.7" stroke-linejoin="round"/><path d="M2.5 5 H10" stroke="#10e8e8" stroke-width="2.6"/></svg>
<div class="t" style="left:141px;top:187.39px;font-size:9.7px;line-height:9.7px;color:#141414;letter-spacing:-0.72px;">wlan1</div>
<div class="t" style="left:208.5px;top:187.39px;font-size:9.7px;line-height:9.7px;color:#141414;letter-spacing:-0.72px;">Wireless (Atheros 11N)</div>
<div class="t" style="right:684.5px;top:187.39px;font-size:9.7px;line-height:9.7px;color:#141414;letter-spacing:-0.72px;text-align:right;">2290</div>
<div class="t" style="right:636.5px;top:187.39px;font-size:9.7px;line-height:9.7px;color:#141414;letter-spacing:-0.72px;text-align:right;">0 bps</div>
<div class="t" style="right:588.5px;top:187.39px;font-size:9.7px;line-height:9.7px;color:#141414;letter-spacing:-0.72px;text-align:right;">0 bps</div>
<div class="t" style="right:548.5px;top:187.39px;font-size:9.7px;line-height:9.7px;color:#141414;letter-spacing:-0.72px;text-align:right;">0</div>
<div class="t" style="right:508.5px;top:187.39px;font-size:9.7px;line-height:9.7px;color:#141414;letter-spacing:-0.72px;text-align:right;">0</div>
<div class="t" style="right:468.5px;top:187.39px;font-size:9.7px;line-height:9.7px;color:#141414;letter-spacing:-0.72px;text-align:right;">0</div>
<div class="t" style="right:428.5px;top:187.39px;font-size:9.7px;line-height:9.7px;color:#141414;letter-spacing:-0.72px;text-align:right;">0</div>
<div class="t" style="right:388.5px;top:187.39px;font-size:9.7px;line-height:9.7px;color:#141414;letter-spacing:-0.72px;text-align:right;">0</div>
<div class="t" style="right:348.5px;top:187.39px;font-size:9.7px;line-height:9.7px;color:#141414;letter-spacing:-0.72px;text-align:right;">0</div>
<div style="left:103px;top:770px;width:918px;height:1px;background:#a8a8a8"></div>
<div style="left:104px;top:771px;width:917px;height:16px;background:#efefef"></div>
<div style="left:1020px;top:771px;width:1px;height:16px;background:#fafafa"></div>
<div class="t" style="left:106px;top:773.39px;font-size:9.7px;line-height:9.7px;color:#141414;letter-spacing:-0.72px;">7 items</div>
<div style="left:197px;top:268px;width:731px;height:296px;background:#f0f0f0;border:1px solid #1e1e1e;box-sizing:border-box"></div>
<div style="left:198px;top:269px;width:729px;height:17px;background:#bfbfbf"></div>
<div class="t" style="left:201px;top:274.69px;font-size:9.7px;line-height:9.7px;color:#fafafa;letter-spacing:-0.72px;">Bridge</div>
<div style="left:898px;top:272px;width:12px;height:12px;background:#f4f4f4;border:1px solid #4a4a4a;box-sizing:border-box;border-radius:1px"></div>
<svg style="position:absolute;left:898px;top:272px" width="12" height="12" viewBox="0 0 12 12"><rect x="3" y="3" width="6" height="6" fill="none" stroke="#333" stroke-width="1"/><rect x="3" y="3" width="6" height="1.5" fill="#333"/></svg>
<div style="left:912px;top:272px;width:12px;height:12px;background:#f4f4f4;border:1px solid #4a4a4a;box-sizing:border-box;border-radius:1px"></div>
<svg style="position:absolute;left:912px;top:272px" width="12" height="12" viewBox="0 0 12 12"><path d="M3 3 L9 9 M9 3 L3 9" stroke="#111" stroke-width="1.6"/></svg>
<div style="left:200px;top:287px;width:36px;height:19px;background:#f0f0f0"></div>
<div style="left:200px;top:287px;width:36px;height:1px;background:#fdfdfd"></div>
<div style="left:200px;top:287px;width:1px;height:19px;background:#fdfdfd"></div>
<div style="left:235px;top:287px;width:1px;height:19px;background:#a8a8a8"></div>
<div class="t" style="left:206px;top:292.89px;font-size:9.7px;line-height:9.7px;color:#141414;letter-spacing:-0.72px;">Bridge</div>
<div style="left:236px;top:290px;width:26px;height:15px;background:#d9d9d9"></div>
<div style="left:262px;top:290px;width:1px;height:15px;background:#fafafa"></div>
<div class="t" style="left:239px;top:294.39px;font-size:9.7px;line-height:9.7px;color:#141414;letter-spacing:-0.72px;">Ports</div>
<div style="left:263px;top:290px;width:30px;height:15px;background:#d9d9d9"></div>
<div style="left:293px;top:290px;width:1px;height:15px;background:#fafafa"></div>
<div class="t" style="left:266px;top:294.39px;font-size:9.7px;line-height:9.7px;color:#141414;letter-spacing:-0.72px;">Filters</div>
<div style="left:294px;top:290px;width:27px;height:15px;background:#d9d9d9"></div>
<div style="left:321px;top:290px;width:1px;height:15px;background:#fafafa"></div>
<div class="t" style="left:297px;top:294.39px;font-size:9.7px;line-height:9.7px;color:#141414;letter-spacing:-0.72px;">NAT</div>
<div style="left:322px;top:290px;width:30px;height:15px;background:#d9d9d9"></div>
<div style="left:352px;top:290px;width:1px;height:15px;background:#fafafa"></div>
<div class="t" style="left:325px;top:294.39px;font-size:9.7px;line-height:9.7px;color:#141414;letter-spacing:-0.72px;">Hosts</div>
<div style="left:236px;top:305px;width:689px;height:1px;background:#fdfdfd"></div>
<div style="left:201px;top:309px;width:18px;height:18px;background:#eeeeee;border:1px solid #a3a3a3;box-sizing:border-box;box-shadow:inset 1px 1px 0 #fff, inset -1px -1px 0 #c8c8c8;border-radius:1.5px"></div>
<svg style="position:absolute;left:205px;top:313px" width="11" height="11" viewBox="0 0 11 11"><path d="M4 0.5 H7 V4 H10.5 V7 H7 V10.5 H4 V7 H0.5 V4 H4 Z" fill="#f00000" stroke="#1a0000" stroke-width="0.9"/></svg>
<div style="left:221px;top:309px;width:19px;height:18px;background:#eeeeee;border:1px solid #a3a3a3;box-sizing:border-box;box-shadow:inset 1px 1px 0 #fff, inset -1px -1px 0 #c8c8c8;border-radius:1.5px"></div>
<svg style="position:absolute;left:225px;top:316px" width="11" height="4" viewBox="0 0 11 4"><rect x="0.6" y="0.6" width="9.8" height="2.8" rx="0.8" fill="#f6f6f6" stroke="#b8b8b8" stroke-width="1"/></svg>
<div style="left:247px;top:309px;width:19px;height:18px;background:#eeeeee;border:1px solid #a3a3a3;box-sizing:border-box;box-shadow:inset 1px 1px 0 #fff, inset -1px -1px 0 #c8c8c8;border-radius:1.5px"></div>
<svg style="position:absolute;left:251px;top:314px" width="12" height="10" viewBox="0 0 12 10"><path d="M1.6 4.8 L4.4 7.6 L9.8 2" stroke="#a4a4a4" stroke-width="3.2" fill="none"/><path d="M1.6 4.8 L4.4 7.6 L9.8 2" stroke="#fafafa" stroke-width="1.3" fill="none"/></svg>
<div style="left:268px;top:309px;width:18px;height:18px;background:#eeeeee;border:1px solid #a3a3a3;box-sizing:border-box;box-shadow:inset 1px 1px 0 #fff, inset -1px -1px 0 #c8c8c8;border-radius:1.5px"></div>
<svg style="position:absolute;left:272px;top:314px" width="11" height="10" viewBox="0 0 11 10"><path d="M1.8 1.2 L8.8 8.4 M8.8 1.2 L1.8 8.4" stroke="#a4a4a4" stroke-width="3.2" fill="none"/><path d="M1.8 1.2 L8.8 8.4 M8.8 1.2 L1.8 8.4" stroke="#fafafa" stroke-width="1.3" fill="none"/></svg>
<div style="left:293px;top:309px;width:19px;height:18px;background:#eeeeee;border:1px solid #a3a3a3;box-sizing:border-box;box-shadow:inset 1px 1px 0 #fff, inset -1px -1px 0 #c8c8c8;border-radius:1.5px"></div>
<svg style="position:absolute;left:297px;top:314px" width="11" height="9" viewBox="0 0 11 9"><path d="M0.6 3.6 L2.4 1.6 H10.4 V8.4 H0.6 Z" fill="#f6f6f6" stroke="#9c9c9c" stroke-width="1"/><path d="M5.6 3.6 h1.2 M7.8 3.6 h1.2" stroke="#a8a8a8" stroke-width="0.9"/></svg>
<div style="left:319px;top:309px;width:19px;height:18px;background:#eeeeee;border:1px solid #a3a3a3;box-sizing:border-box;box-shadow:inset 1px 1px 0 #fff, inset -1px -1px 0 #c8c8c8;border-radius:1.5px"></div>
<svg style="position:absolute;left:323px;top:313.8px" width="11" height="11" viewBox="0 0 11 11"><path d="M0.6 0.8 Q5.5 1.4 10.4 0.8 L6.3 4.8 V9.8 H4.7 V4.8 Z" fill="#8c9ee0" stroke="#1a1a38" stroke-width="1.1" stroke-linejoin="round"/></svg>
<div style="left:345px;top:309px;width:47px;height:18px;background:#eeeeee;border:1px solid #a3a3a3;box-sizing:border-box;box-shadow:inset 1px 1px 0 #fff, inset -1px -1px 0 #c8c8c8;border-radius:1.5px"></div>
<div class="t" style="left:345px;width:47px;top:313.69px;font-size:9.7px;line-height:9.7px;color:#141414;letter-spacing:-0.72px;text-align:center;">Settings</div>
<div style="left:874px;top:310px;width:49px;height:15px;background:#fff;border:1px solid #c4c4c4;box-sizing:border-box"></div>
<div class="t" style="left:878px;top:313.89px;font-size:9.7px;line-height:9.7px;color:#a0a6b4;letter-spacing:0px;font-style:italic;-webkit-text-stroke:0">Find</div>
<div style="left:924px;top:305px;width:1px;height:238px;background:#a8a8a8"></div>
<div style="left:201px;top:329px;width:722px;height:214px;background:#fff"></div>
<div style="left:201px;top:329px;width:1px;height:214px;background:#a0a0a0"></div>
<div style="left:201px;top:329px;width:722px;height:1px;background:#b4b4b4"></div>
<div style="left:202px;top:330px;width:721px;height:13px;background:#eeeeee"></div>
<div style="left:202px;top:342px;width:721px;height:1px;background:#a8a8a8"></div>
<div style="left:222px;top:330px;width:1px;height:12px;background:#b8b8b8"></div>
<div style="left:223px;top:330px;width:1px;height:12px;background:#d8d8d8"></div>
<div style="left:224px;top:330px;width:1px;height:12px;background:#fafafa"></div>
<div class="t" style="left:225px;top:332.39px;font-size:9.7px;line-height:9.7px;color:#141414;letter-spacing:-0.72px;">Name</div>
<div style="left:302px;top:330px;width:1px;height:12px;background:#b8b8b8"></div>
<div style="left:303px;top:330px;width:1px;height:12px;background:#d8d8d8"></div>
<div style="left:304px;top:330px;width:1px;height:12px;background:#fafafa"></div>
<div class="t" style="left:305px;top:332.39px;font-size:9.7px;line-height:9.7px;color:#141414;letter-spacing:-0.72px;">Type</div>
<div style="left:399px;top:330px;width:1px;height:12px;background:#b8b8b8"></div>
<div style="left:400px;top:330px;width:1px;height:12px;background:#d8d8d8"></div>
<div style="left:401px;top:330px;width:1px;height:12px;background:#fafafa"></div>
<div class="t" style="left:402px;top:332.39px;font-size:9.7px;line-height:9.7px;color:#141414;letter-spacing:-0.72px;">L2 MTU</div>
<div style="left:735px;top:330px;width:1px;height:12px;background:#b8b8b8"></div>
<div style="left:736px;top:330px;width:1px;height:12px;background:#d8d8d8"></div>
<div style="left:737px;top:330px;width:1px;height:12px;background:#fafafa"></div>
<div class="t" style="left:738px;top:332.39px;font-size:9.7px;line-height:9.7px;color:#141414;letter-spacing:-0.72px;">Rx Errors</div>
<div style="left:775px;top:330px;width:1px;height:12px;background:#b8b8b8"></div>
<div style="left:776px;top:330px;width:1px;height:12px;background:#d8d8d8"></div>
<div style="left:777px;top:330px;width:1px;height:12px;background:#fafafa"></div>
<div class="t" style="left:778px;top:332.39px;font-size:9.7px;line-height:9.7px;color:#141414;letter-spacing:-0.72px;">MAC Address</div>
<div style="left:867px;top:330px;width:1px;height:12px;background:#b8b8b8"></div>
<div style="left:868px;top:330px;width:1px;height:12px;background:#d8d8d8"></div>
<div style="left:869px;top:330px;width:1px;height:12px;background:#fafafa"></div>
<div class="t" style="left:870px;top:332.39px;font-size:9.7px;line-height:9.7px;color:#141414;letter-spacing:-0.72px;">Protoco...</div>
<div style="left:908px;top:330px;width:1px;height:12px;background:#b8b8b8"></div>
<div style="left:909px;top:330px;width:1px;height:12px;background:#d8d8d8"></div>
<div style="left:910px;top:330px;width:1px;height:12px;background:#fafafa"></div>
<div class="t" style="right:290px;top:332.39px;font-size:9.7px;line-height:9.7px;color:#141414;letter-spacing:-0.72px;text-align:right;">Tx Errors</div>
<svg style="position:absolute;left:294px;top:333px" width="7" height="7" viewBox="0 0 7 7"><path d="M1.2 6 L3.8 1.5" stroke="#707070" stroke-width="1.2" fill="none"/><path d="M3.8 1.5 L5.5 6" stroke="#fdfdfd" stroke-width="0.9" fill="none"/></svg>
<svg style="position:absolute;left:912.5px;top:334.5px" width="8" height="6" viewBox="0 0 8 6"><path d="M0 0.5 H8 L4 5 Z" fill="#111"/></svg>
<div style="left:201px;top:543px;width:722px;height:1px;background:#a0a0a0"></div>
<div style="left:201px;top:544px;width:723px;height:16px;background:#efefef"></div>
<div style="left:201px;top:543px;width:1px;height:17px;background:#b0b0b0"></div>
<div style="left:201px;top:560px;width:724px;height:1px;background:#b8b8b8"></div>
<div class="t" style="left:203px;top:546.89px;font-size:9.7px;line-height:9.7px;color:#141414;letter-spacing:-0.72px;">0 items out of 7</div>
<div style="left:404px;top:252px;width:316px;height:343px;background:#f0f0f0;border:1px solid #1e1e1e;box-sizing:border-box"></div>
<div style="left:405px;top:253px;width:314px;height:17px;background:#5050c8"></div>
<div style="left:405px;top:253px;width:314px;height:1px;background:#6c6ce0"></div>
<div style="left:405px;top:269px;width:314px;height:1px;background:#3434c4"></div>
<div class="t" style="left:409px;top:258.39px;font-size:9.7px;line-height:9.7px;color:#f4f4ff;letter-spacing:-0.72px;">New Interface</div>
<div style="left:691px;top:256px;width:11px;height:12px;background:#f4f4f4;border:1px solid #3a3a3a;box-sizing:border-box;border-radius:1px"></div>
<svg style="position:absolute;left:691px;top:256px" width="11" height="12" viewBox="0 0 11 12"><rect x="2.5" y="3" width="6" height="6" fill="none" stroke="#333" stroke-width="1"/><rect x="2.5" y="3" width="6" height="1.5" fill="#333"/></svg>
<div style="left:705px;top:256px;width:11px;height:12px;background:#f4f4f4;border:1px solid #3a3a3a;box-sizing:border-box;border-radius:1px"></div>
<svg style="position:absolute;left:705px;top:256px" width="11" height="12" viewBox="0 0 11 12"><path d="M2.5 3 L8.5 9 M8.5 3 L2.5 9" stroke="#111" stroke-width="1.6"/></svg>
<div style="left:407px;top:271px;width:42px;height:19px;background:#f0f0f0"></div>
<div style="left:407px;top:271px;width:42px;height:1px;background:#fdfdfd"></div>
<div style="left:407px;top:271px;width:1px;height:19px;background:#fdfdfd"></div>
<div style="left:448px;top:271px;width:1px;height:19px;background:#a8a8a8"></div>
<div class="t" style="left:413px;top:276.99px;font-size:9.7px;line-height:9.7px;color:#141414;letter-spacing:-0.72px;">General</div>
<div style="left:449px;top:273px;width:24px;height:16px;background:#d9d9d9"></div>
<div style="left:473px;top:273px;width:1px;height:16px;background:#fafafa"></div>
<div class="t" style="left:452px;top:278.39px;font-size:9.7px;line-height:9.7px;color:#141414;letter-spacing:-0.72px;">STP</div>
<div style="left:474px;top:273px;width:32px;height:16px;background:#d9d9d9"></div>
<div style="left:506px;top:273px;width:1px;height:16px;background:#fafafa"></div>
<div class="t" style="left:477px;top:278.39px;font-size:9.7px;line-height:9.7px;color:#141414;letter-spacing:-0.72px;">Status</div>
<div style="left:507px;top:273px;width:33px;height:16px;background:#d9d9d9"></div>
<div style="left:540px;top:273px;width:1px;height:16px;background:#fafafa"></div>
<div class="t" style="left:510px;top:278.39px;font-size:9.7px;line-height:9.7px;color:#141414;letter-spacing:-0.72px;">Traffic</div>
<div style="left:449px;top:289px;width:206px;height:1px;background:#fdfdfd"></div>
<div style="left:654px;top:289px;width:1px;height:285px;background:#a8a8a8"></div>
<div style="left:407px;top:573px;width:248px;height:1px;background:#a8a8a8"></div>
<div class="t" style="right:530px;top:299.39px;font-size:9.7px;line-height:9.7px;color:#1a1aff;letter-spacing:-0.72px;text-align:right;">Name:</div>
<div style="left:499px;top:296px;width:149px;height:14px;background:#fff;border:1px solid #b0b0b0;box-sizing:border-box"></div>
<div class="t" style="left:501.5px;top:299.39px;font-size:9.7px;line-height:9.7px;color:#141414;letter-spacing:-0.72px;">bridge_local</div>
<div class="t" style="right:530px;top:319.39px;font-size:9.7px;line-height:9.7px;color:#141414;letter-spacing:-0.72px;text-align:right;">Type:</div>
<div style="left:499px;top:316px;width:149px;height:14px;background:#efefef;border:1px solid #b0b0b0;box-sizing:border-box"></div>
<div class="t" style="left:501.5px;top:319.39px;font-size:9.7px;line-height:9.7px;color:#141414;letter-spacing:-0.72px;">Bridge</div>
<div class="t" style="right:530px;top:339.39px;font-size:9.7px;line-height:9.7px;color:#141414;letter-spacing:-0.72px;text-align:right;">MTU:</div>
<div style="left:499px;top:336px;width:149px;height:14px;background:#fff;border:1px solid #b0b0b0;box-sizing:border-box"></div>
<div class="t" style="left:501.5px;top:339.39px;font-size:9.7px;line-height:9.7px;color:#141414;letter-spacing:-0.72px;">1500</div>
<div class="t" style="right:530px;top:359.39px;font-size:9.7px;line-height:9.7px;color:#141414;letter-spacing:-0.72px;text-align:right;">L2 MTU:</div>
<div style="left:499px;top:356px;width:149px;height:14px;background:#efefef;border:1px solid #b0b0b0;box-sizing:border-box"></div>
<div class="t" style="right:530px;top:379.39px;font-size:9.7px;line-height:9.7px;color:#141414;letter-spacing:-0.72px;text-align:right;">MAC Address:</div>
<div style="left:499px;top:376px;width:149px;height:14px;background:#efefef;border:1px solid #b0b0b0;box-sizing:border-box"></div>
<div class="t" style="right:530px;top:399.39px;font-size:9.7px;line-height:9.7px;color:#141414;letter-spacing:-0.72px;text-align:right;">ARP:</div>
<div style="left:499px;top:396px;width:134px;height:14px;background:#fff;border:1px solid #b0b0b0;box-sizing:border-box"></div>
<div class="t" style="left:501.5px;top:399.39px;font-size:9.7px;line-height:9.7px;color:#141414;letter-spacing:-0.72px;">enabled</div>
<div style="left:634px;top:396px;width:14px;height:14px;background:#ececec;border:1px solid #b0b0b0;box-sizing:border-box"></div>
<svg style="position:absolute;left:637px;top:399px" width="8" height="9" viewBox="0 0 8 9"><path d="M0.5 0.8 H7.5" stroke="#111" stroke-width="1.2"/><path d="M0.5 3 H7.5 L4 7.5 Z" fill="#111"/></svg>
<div class="t" style="right:530px;top:419.39px;font-size:9.7px;line-height:9.7px;color:#141414;letter-spacing:-0.72px;text-align:right;">Admin. MAC Address:</div>
<div style="left:499px;top:416px;width:135px;height:14px;background:#efefef;border:1px solid #b0b0b0;box-sizing:border-box"></div>
<svg style="position:absolute;left:637px;top:420.8px" width="8" height="6" viewBox="0 0 8 6"><path d="M0.5 0.5 H7.5 L4 5 Z" fill="#111"/></svg>
<div style="left:547px;top:298px;width:1px;height:10px;background:#111"></div>
<div style="left:663px;top:274px;width:51px;height:19px;background:#eeeeee;border:1px solid #3c3c3c;box-sizing:border-box;box-shadow:inset 1px 1px 0 #fff, inset -1px -1px 0 #c8c8c8;border-radius:1.5px"></div>
<div class="t" style="left:663px;width:51px;top:279.19px;font-size:9.7px;line-height:9.7px;color:#141414;letter-spacing:-0.72px;text-align:center;">OK</div>
<div style="left:663px;top:295px;width:51px;height:19px;background:#eeeeee;border:1px solid #a3a3a3;box-sizing:border-box;box-shadow:inset 1px 1px 0 #fff, inset -1px -1px 0 #c8c8c8;border-radius:1.5px"></div>
<div class="t" style="left:663px;width:51px;top:300.19px;font-size:9.7px;line-height:9.7px;color:#141414;letter-spacing:-0.72px;text-align:center;">Cancel</div>
<div style="left:663px;top:316px;width:51px;height:19px;background:#eeeeee;border:1px solid #a3a3a3;box-sizing:border-box;box-shadow:inset 1px 1px 0 #fff, inset -1px -1px 0 #c8c8c8;border-radius:1.5px"></div>
<div class="t" style="left:663px;width:51px;top:321.19px;font-size:9.7px;line-height:9.7px;color:#141414;letter-spacing:-0.72px;text-align:center;">Apply</div>
<div style="left:663px;top:342px;width:51px;height:19px;background:#eeeeee;border:1px solid #a3a3a3;box-sizing:border-box;box-shadow:inset 1px 1px 0 #fff, inset -1px -1px 0 #c8c8c8;border-radius:1.5px"></div>
<div class="t" style="left:663px;width:51px;top:347.19px;font-size:9.7px;line-height:9.7px;color:#141414;letter-spacing:-0.72px;text-align:center;">Disable</div>
<div style="left:663px;top:362px;width:51px;height:19px;background:#eeeeee;border:1px solid #a3a3a3;box-sizing:border-box;box-shadow:inset 1px 1px 0 #fff, inset -1px -1px 0 #c8c8c8;border-radius:1.5px"></div>
<div class="t" style="left:663px;width:51px;top:367.19px;font-size:9.7px;line-height:9.7px;color:#141414;letter-spacing:-0.72px;text-align:center;">Comment</div>
<div style="left:663px;top:383px;width:51px;height:19px;background:#eeeeee;border:1px solid #a3a3a3;box-sizing:border-box;box-shadow:inset 1px 1px 0 #fff, inset -1px -1px 0 #c8c8c8;border-radius:1.5px"></div>
<div class="t" style="left:663px;width:51px;top:388.19px;font-size:9.7px;line-height:9.7px;color:#141414;letter-spacing:-0.72px;text-align:center;">Copy</div>
<div style="left:663px;top:404px;width:51px;height:19px;background:#eeeeee;border:1px solid #a3a3a3;box-sizing:border-box;box-shadow:inset 1px 1px 0 #fff, inset -1px -1px 0 #c8c8c8;border-radius:1.5px"></div>
<div class="t" style="left:663px;width:51px;top:409.19px;font-size:9.7px;line-height:9.7px;color:#141414;letter-spacing:-0.72px;text-align:center;">Remove</div>
<div style="left:663px;top:429px;width:51px;height:19px;background:#eeeeee;border:1px solid #a3a3a3;box-sizing:border-box;box-shadow:inset 1px 1px 0 #fff, inset -1px -1px 0 #c8c8c8;border-radius:1.5px"></div>
<div class="t" style="left:663px;width:51px;top:434.19px;font-size:9.7px;line-height:9.7px;color:#141414;letter-spacing:-0.72px;text-align:center;">Torch</div>
<div style="left:406px;top:576px;width:101px;height:16px;background:#efefef;border-left:1px solid #b8b8b8;border-top:1px solid #b8b8b8;box-sizing:border-box"></div>
<div class="t" style="left:408.5px;top:579.09px;font-size:9.7px;line-height:9.7px;color:#141414;letter-spacing:-0.72px;">enabled</div>
<div style="left:508px;top:576px;width:102px;height:16px;background:#efefef;border-left:1px solid #b8b8b8;border-top:1px solid #b8b8b8;box-sizing:border-box"></div>
<div class="t" style="left:510.5px;top:579.09px;font-size:9.7px;line-height:9.7px;color:#a8a8a8;letter-spacing:-0.72px;">running</div>
<div style="left:611px;top:576px;width:105px;height:16px;background:#efefef;border-left:1px solid #b8b8b8;border-top:1px solid #b8b8b8;box-sizing:border-box"></div>
<div class="t" style="left:613.5px;top:579.09px;font-size:9.7px;line-height:9.7px;color:#a8a8a8;letter-spacing:-0.72px;">slave</div>
</body></html>
